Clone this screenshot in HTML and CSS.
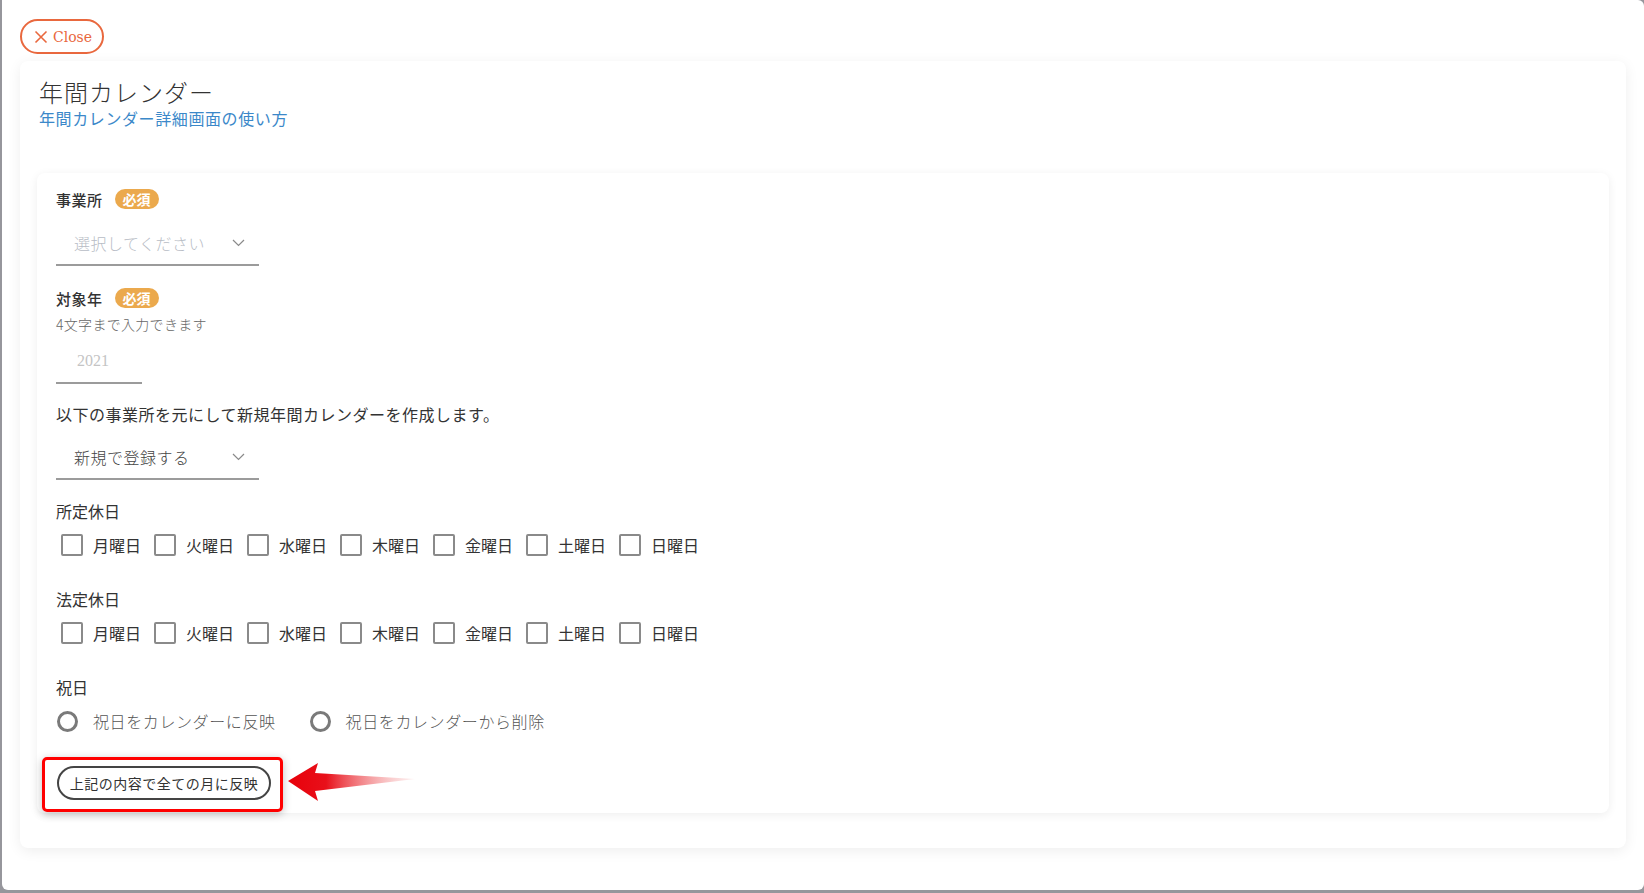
FILE: index.html
```html
<!DOCTYPE html>
<html lang="ja">
<head>
  <meta charset="UTF-8" />
  <title>年間カレンダー</title>
  <link rel="stylesheet" href="styles.css">
</head>
<body>
  <div class="window">
    <button class="close">
      <svg class="close-icon" width="14" height="14" viewBox="0 0 14 14"><path d="M1.5 1.5 L12.5 12.5 M12.5 1.5 L1.5 12.5" stroke="#e9683e" stroke-width="1.6" fill="none"/></svg>
      Close
    </button>

    <div class="panel">
      <h1 class="title">年間カレンダー</h1>
      <a class="help" href="#">年間カレンダー詳細画面の使い方</a>

      <div class="form-card">
        <div class="field-label">事業所<span class="badge">必須</span></div>
        <div class="select placeholder">
          <span>選択してください</span>
          <svg class="chevron" width="13" height="8" viewBox="0 0 13 8"><path d="M1 1 L6.5 6.5 L12 1" stroke="#8a8a8a" stroke-width="1.2" fill="none"/></svg>
        </div>

        <div class="field-label mt-20">対象年<span class="badge">必須</span></div>
        <div class="hint">4文字まで入力できます</div>
        <div class="year-input">2021</div>

        <div class="description">以下の事業所を元にして新規年間カレンダーを作成します。</div>
        <div class="select select-second">
          <span>新規で登録する</span>
          <svg class="chevron" width="13" height="8" viewBox="0 0 13 8"><path d="M1 1 L6.5 6.5 L12 1" stroke="#8a8a8a" stroke-width="1.2" fill="none"/></svg>
        </div>

        <div class="group-label mt-19">所定休日</div>
        <div class="check-row">
          <label class="check"><span class="box"></span>月曜日</label>
          <label class="check"><span class="box"></span>火曜日</label>
          <label class="check"><span class="box"></span>水曜日</label>
          <label class="check"><span class="box"></span>木曜日</label>
          <label class="check"><span class="box"></span>金曜日</label>
          <label class="check"><span class="box"></span>土曜日</label>
          <label class="check"><span class="box"></span>日曜日</label>
        </div>

        <div class="group-label mt-30">法定休日</div>
        <div class="check-row">
          <label class="check"><span class="box"></span>月曜日</label>
          <label class="check"><span class="box"></span>火曜日</label>
          <label class="check"><span class="box"></span>水曜日</label>
          <label class="check"><span class="box"></span>木曜日</label>
          <label class="check"><span class="box"></span>金曜日</label>
          <label class="check"><span class="box"></span>土曜日</label>
          <label class="check"><span class="box"></span>日曜日</label>
        </div>

        <div class="group-label mt-30">祝日</div>
        <div class="radio-row">
          <label class="radio"><span class="circle"></span>祝日をカレンダーに反映</label>
          <label class="radio"><span class="circle"></span>祝日をカレンダーから削除</label>
        </div>

        <div class="apply-row">
          <div class="highlight">
            <button class="apply">上記の内容で全ての月に反映</button>
          </div>
          <svg class="arrow" width="130" height="40" viewBox="0 0 130 40">
            <defs>
              <linearGradient id="tail" x1="0" y1="0" x2="1" y2="0">
                <stop offset="0" stop-color="#e8000a"/>
                <stop offset="0.3" stop-color="#e8101a"/>
                <stop offset="1" stop-color="#f4a0a0" stop-opacity="0.15"/>
              </linearGradient>
            </defs>
            <polygon points="1,19 31,1 28,11 128,17 28,29 31,39" fill="url(#tail)"/>
          </svg>
        </div>
      </div>
    </div>
  </div>
</body>
</html>
```

FILE: styles.css
```css
body {
  margin: 0;
  background-color: #96969c;
  font-family: "Noto Sans CJK JP", "Noto Sans", sans-serif;
  color: #333;
}

.window {
  margin: 0 0 3px 2px;
  height: 890px;
  box-sizing: border-box;
  background-color: #fff;
  border-radius: 0 6px 6px 6px;
  padding: 19px 18px 0 18px;
}

.close {
  display: flex;
  align-items: center;
  gap: 5px;
  width: 84px;
  height: 35px;
  padding: 0 0 0 12px;
  border: 2px solid #e9683e;
  border-radius: 18px;
  background-color: #fff;
  color: #e9683e;
  font-family: "DejaVu Serif", serif;
  font-size: 14px;
  cursor: pointer;
}

.panel {
  margin-top: 7px;
  padding: 15px 17px 35px 17px;
  border-radius: 8px;
  background-color: #fff;
  box-shadow: 0 3px 14px rgba(0, 0, 0, 0.07);
}

.title {
  margin: 0;
  padding-left: 2px;
  font-size: 24px;
  font-weight: 300;
  line-height: 31px;
  letter-spacing: 1px;
  color: #333;
}

.help {
  display: block;
  padding-left: 2px;
  font-size: 16px;
  line-height: 22px;
  letter-spacing: 0.6px;
  color: #3b88c9;
  text-decoration: none;
}

.form-card {
  margin-top: 44px;
  padding: 14px 19px 1px 19px;
  border-radius: 8px;
  background-color: #fff;
  box-shadow: 0 2px 10px rgba(0, 0, 0, 0.07);
}

.field-label {
  display: flex;
  align-items: center;
  gap: 12px;
  height: 24px;
  font-size: 15px;
  font-weight: 500;
  letter-spacing: 0.5px;
}

.badge {
  display: inline-flex;
  align-items: center;
  justify-content: center;
  width: 44px;
  height: 20px;
  border-radius: 10px;
  background-color: #eba94d;
  color: #fff;
  font-size: 14px;
  font-weight: 700;
  letter-spacing: 0;
}

.select {
  display: flex;
  align-items: center;
  justify-content: space-between;
  width: 203px;
  height: 44px;
  box-sizing: border-box;
  margin-top: 11px;
  padding: 0 14px 0 18px;
  border-bottom: 2px solid #9b9b9b;
  font-size: 16px;
  font-weight: 300;
  color: #444;
  letter-spacing: 0.5px;
}

.select.placeholder {
  color: #b7bcc5;
}

.select-second {
  margin-top: 10px;
}

.hint {
  margin-top: 4px;
  font-size: 14px;
  line-height: 20px;
  font-weight: 300;
  color: #666;
  letter-spacing: 0.3px;
}

.year-input {
  display: flex;
  align-items: center;
  width: 86px;
  height: 44px;
  box-sizing: border-box;
  margin-top: 6px;
  padding-left: 21px;
  border-bottom: 2px solid #9b9b9b;
  font-family: "Liberation Serif", serif;
  font-size: 16px;
  color: #c4c4c4;
}

.description {
  margin-top: 18px;
  font-size: 16px;
  line-height: 24px;
  letter-spacing: 0.5px;
}

.group-label {
  font-size: 16px;
  line-height: 24px;
}

.mt-19 { margin-top: 19px; }
.mt-20 { margin-top: 20px; }
.mt-30 { margin-top: 30px; }

.check-row {
  display: flex;
  gap: 8px;
  margin-top: 10px;
  height: 24px;
}

.check {
  display: flex;
  align-items: center;
  font-size: 16px;
  color: #333;
}

.box {
  width: 22px;
  height: 22px;
  box-sizing: border-box;
  margin: 0 10px 0 5px;
  border: 2px solid #8a8a8a;
  border-radius: 2px;
}

.radio-row {
  display: flex;
  gap: 33px;
  margin-top: 10px;
  height: 24px;
}

.radio {
  display: flex;
  align-items: center;
  font-size: 16px;
  font-weight: 300;
  letter-spacing: 0.6px;
  color: #555;
}

.circle {
  width: 21px;
  height: 21px;
  box-sizing: border-box;
  margin: 0 15px 0 1px;
  border: 3px solid #7a7a7a;
  border-radius: 50%;
}

.apply-row {
  display: flex;
  align-items: center;
  margin-top: 24px;
  margin-left: -14px;
}

.highlight {
  padding: 6px 9px 9px 12px;
  border: 3px solid #f00;
  border-radius: 5px;
  box-shadow: 0 2px 8px rgba(0, 0, 0, 0.25);
}

.apply {
  display: block;
  width: 214px;
  height: 34px;
  border: 2px solid #444;
  border-radius: 17px;
  background-color: #fff;
  font-family: "Noto Sans CJK JP", sans-serif;
  font-size: 14px;
  letter-spacing: 0.5px;
  color: #333;
  cursor: pointer;
}

.arrow {
  margin-left: 4px;
  margin-top: -6px;
}
```
